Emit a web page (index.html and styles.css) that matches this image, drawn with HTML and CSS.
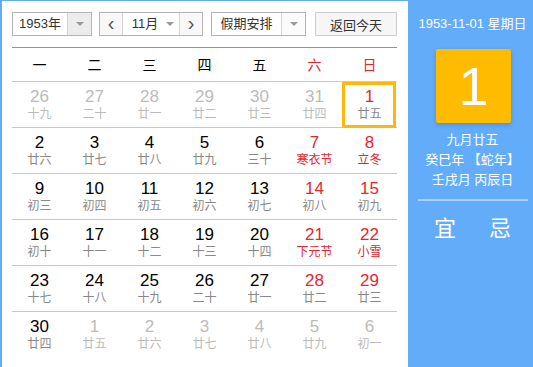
FILE: index.html
```html
<!DOCTYPE html>
<html lang="zh">
<head>
<meta charset="utf-8">
<link rel="stylesheet" href="styles.css">
</head>
<body>
<div class="cal">
  <div class="main">
    <div class="toolbar">
      <div class="sel year"><span class="val">1953年</span><span class="arr"><i class="tri"></i></span></div>
      <div class="sel month"><span class="nav">&lsaquo;</span><span class="val">11月<i class="tri"></i></span><span class="nav">&rsaquo;</span></div>
      <div class="sel hol"><span class="val">假期安排</span><span class="arr white"><i class="tri"></i></span></div>
      <div class="btn">返回今天</div>
    </div>
    <div class="grid">
      <div class="week">
        <span>一</span><span>二</span><span>三</span><span>四</span><span>五</span><span class="red">六</span><span class="red">日</span>
      </div>
      <div class="row">
        <div class="cell other"><b>26</b><em>十九</em></div>
        <div class="cell other"><b>27</b><em>二十</em></div>
        <div class="cell other"><b>28</b><em>廿一</em></div>
        <div class="cell other"><b>29</b><em>廿二</em></div>
        <div class="cell other"><b>30</b><em>廿三</em></div>
        <div class="cell other"><b>31</b><em>廿四</em></div>
        <div class="cell sun sel-day"><b>1</b><em>廿五</em></div>
      </div>
      <div class="row">
        <div class="cell"><b>2</b><em>廿六</em></div>
        <div class="cell"><b>3</b><em>廿七</em></div>
        <div class="cell"><b>4</b><em>廿八</em></div>
        <div class="cell"><b>5</b><em>廿九</em></div>
        <div class="cell"><b>6</b><em>三十</em></div>
        <div class="cell sun fest"><b>7</b><em>寒衣节</em></div>
        <div class="cell sun fest"><b>8</b><em>立冬</em></div>
      </div>
      <div class="row">
        <div class="cell"><b>9</b><em>初三</em></div>
        <div class="cell"><b>10</b><em>初四</em></div>
        <div class="cell"><b>11</b><em>初五</em></div>
        <div class="cell"><b>12</b><em>初六</em></div>
        <div class="cell"><b>13</b><em>初七</em></div>
        <div class="cell sun"><b>14</b><em>初八</em></div>
        <div class="cell sun"><b>15</b><em>初九</em></div>
      </div>
      <div class="row">
        <div class="cell"><b>16</b><em>初十</em></div>
        <div class="cell"><b>17</b><em>十一</em></div>
        <div class="cell"><b>18</b><em>十二</em></div>
        <div class="cell"><b>19</b><em>十三</em></div>
        <div class="cell"><b>20</b><em>十四</em></div>
        <div class="cell sun fest"><b>21</b><em>下元节</em></div>
        <div class="cell sun fest"><b>22</b><em>小雪</em></div>
      </div>
      <div class="row">
        <div class="cell"><b>23</b><em>十七</em></div>
        <div class="cell"><b>24</b><em>十八</em></div>
        <div class="cell"><b>25</b><em>十九</em></div>
        <div class="cell"><b>26</b><em>二十</em></div>
        <div class="cell"><b>27</b><em>廿一</em></div>
        <div class="cell sun"><b>28</b><em>廿二</em></div>
        <div class="cell sun"><b>29</b><em>廿三</em></div>
      </div>
      <div class="row last">
        <div class="cell"><b>30</b><em>廿四</em></div>
        <div class="cell other"><b>1</b><em>廿五</em></div>
        <div class="cell other"><b>2</b><em>廿六</em></div>
        <div class="cell other"><b>3</b><em>廿七</em></div>
        <div class="cell other"><b>4</b><em>廿八</em></div>
        <div class="cell other"><b>5</b><em>廿九</em></div>
        <div class="cell other"><b>6</b><em>初一</em></div>
      </div>
    </div>
  </div>
  <div class="side">
    <div class="date">1953-11-01 星期日</div>
    <div class="big">1</div>
    <div class="lunar">九月廿五</div>
    <div class="lunar">癸巳年 【蛇年】</div>
    <div class="lunar">壬戌月 丙辰日</div>
    <div class="sep"></div>
    <div class="yiji"><span>宜</span><span>忌</span></div>
  </div>
</div>
</body>
</html>
```

FILE: styles.css
```css
* { box-sizing: border-box; margin: 0; padding: 0; }
html, body { width: 533px; height: 367px; overflow: hidden; background: #fff; }
body {
  font-family: "Liberation Sans", Arial, "Noto Sans CJK SC", sans-serif;
  color: #000;
}
.cal {
  display: flex;
  width: 533px;
  height: 367px;
  border-top: 1px solid #63acfa;
  border-left: 2px solid #63acfa;
}
.main {
  width: 406px;
  padding: 11px 11px 0 10px;
}
.toolbar {
  display: flex;
  height: 24px;
  font-size: 13px;
  color: #333;
}
.sel {
  display: flex;
  border: 1px solid #b4b4b4;
  height: 24px;
  background: #fff;
}
.sel .val {
  flex: 1;
  display: flex;
  align-items: center;
  justify-content: center;
  line-height: 22px;
}
.sel .arr {
  width: 24px;
  display: flex;
  align-items: center;
  justify-content: center;
  background: #ececec;
  border-left: 1px solid #d4d4d4;
}
.sel .arr.white { background: #fbfbfb; }
.tri {
  display: inline-block;
  width: 0; height: 0;
  border-left: 4px solid transparent;
  border-right: 4px solid transparent;
  border-top: 4px solid #999;
}
.year { width: 80px; }
.month { width: 104px; margin-left: 7px; }
.month .val { gap: 8px; padding-left: 4px; }
.month .nav {
  width: 23px;
  display: flex;
  align-items: center;
  justify-content: center;
  font-size: 20px;
  line-height: 20px;
  color: #555;
  padding-bottom: 3px;
  background: #f8f8f8;
}
.month .nav:first-child { border-right: 1px solid #d4d4d4; }
.month .nav:last-child { border-left: 1px solid #d4d4d4; }
.hol { width: 95px; margin-left: 8px; }
.btn {
  width: 82px;
  margin-left: 9px;
  border: 1px solid #ccc;
  background: #f6f6f6;
  display: flex;
  align-items: center;
  justify-content: center;
  font-size: 13px;
  color: #333;
}
.grid {
  margin-top: 11px;
  border-top: 1px solid #5a9ff0;
}
.week {
  display: grid;
  grid-template-columns: repeat(7, 55px);
  height: 34px;
  border-bottom: 1px solid #c8c8c8;
  font-size: 14px;
  align-items: center;
  text-align: center;
  padding-bottom: 1px;
}
.red { color: #e4262f; }
.row {
  display: grid;
  grid-template-columns: repeat(7, 55px);
  height: 46px;
  border-bottom: 1px solid #c8c8c8;
}
.row.last { border-bottom: none; }
.cell {
  position: relative;
  display: flex;
  flex-direction: column;
  align-items: center;
  padding-top: 6px;
}
.cell b {
  font-weight: normal;
  font-size: 17px;
  line-height: 18px;
  color: #000;
}
.cell em {
  font-style: normal;
  font-size: 12px;
  line-height: 17px;
  color: #888;
}
.cell.sun b { color: #e4262f; }
.cell.fest em { color: #e4262f; }
.cell.other b, .cell.other em { color: #bbb; }
.sel-day::after {
  content: "";
  position: absolute;
  left: 0; right: 1px; top: 0; bottom: -1px;
  border: 3px solid #ffb80a;
}
.side {
  width: 125px;
  background: #63acfa;
  color: #fff;
  display: flex;
  flex-direction: column;
  align-items: center;
  padding-left: 4px;
}
.date {
  margin-top: 14px;
  font-size: 13px;
  line-height: 18px;
}
.big {
  margin-top: 16px;
  margin-left: 2px;
  width: 75px;
  height: 74px;
  background: #ffbb00;
  border-radius: 2px;
  box-shadow: 0 2px 4px rgba(0,60,140,0.25);
  font-size: 54px;
  line-height: 74px;
  text-align: center;
}
.lunar {
  font-size: 13px;
  line-height: 20px;
}
.big + .lunar { margin-top: 7px; }
.sep {
  margin-top: 9px;
  width: 110px;
  height: 2px;
  background: rgba(255,255,255,0.45);
  margin-left: 1px;
}
.yiji {
  margin-top: 13px;
  display: flex;
  gap: 33px;
  font-size: 22px;
  line-height: 30px;
}
```
